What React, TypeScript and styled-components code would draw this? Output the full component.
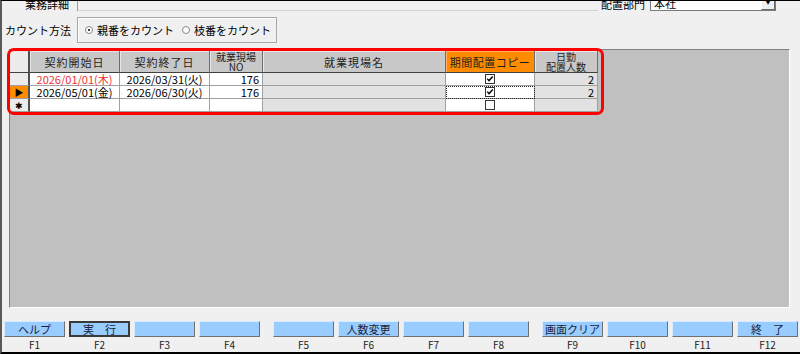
import React from 'react'
import styled, { createGlobalStyle, css } from 'styled-components'

const GlobalStyle = createGlobalStyle`
  body {
    margin: 0;
    background: #f0f0f0;
    font-family: "Noto Sans CJK JP", "Noto Sans", sans-serif;
  }
  * { box-sizing: border-box; }
`

const Window = styled.div`
  width: 800px;
  height: 354px;
  background: #f0f0f0;
  border-top: 1px solid #000;
  border-bottom: 2px solid #000;
  border-left: 2px solid #5a5a5a;
  display: flex;
  flex-direction: column;
  overflow: hidden;
  color: #000;
`

// --- top strip (tab edge + 配置部門 select, cut off at the top) ---
const TopBar = styled.div`
  height: 10px;
  display: flex;
  align-items: flex-end;
  overflow: hidden;
  font-size: 11px;
`

const TabLabel = styled.div`
  width: 76px;
  height: 14px;
  line-height: 14px;
  padding-left: 23px;
  border-right: 1px solid #9a9a9a;
  flex-shrink: 0;
`

const TabLine = styled.div`
  flex: 1;
  height: 100%;
  border-bottom: 1px solid #d4d4d4;
`

const DeptLabel = styled.div`
  height: 14px;
  line-height: 14px;
  margin: 0 5px 0 3px;
`

const Select = styled.div`
  width: 126px;
  height: 14px;
  margin-right: 24px;
  background: #fff;
  border: 1px solid #7a7a7a;
  border-top: none;
  display: flex;
  align-items: stretch;
  line-height: 12px;
  padding-left: 3px;
`

const SelectValue = styled.span`
  flex: 1;
`

const SelectButton = styled.span`
  width: 14px;
  background: #f0f0f0;
  border-left: 1px solid #fff;
  border-right: 1px solid #696969;
  border-bottom: 1px solid #696969;
  font-size: 7px;
  display: flex;
  align-items: flex-end;
  justify-content: center;
  padding-bottom: 2px;
`

// --- カウント方法 row ---
const FilterRow = styled.div`
  height: 37px;
  padding: 6px 0 0 3px;
  display: flex;
  align-items: flex-start;
  font-size: 11px;
`

const FilterLabel = styled.div`
  width: 72px;
  line-height: 26px;
`

const RadioGroup = styled.div`
  width: 200px;
  height: 26px;
  border: 1px solid #a8a8a8;
  box-shadow: inset 1px 1px 0 #fff;
  display: flex;
  align-items: center;
  gap: 8px;
  padding-left: 7px;
`

const RadioOption = styled.label`
  display: flex;
  align-items: center;
  gap: 4px;
  font-size: 11px;
`

const RadioDot = styled.span<{ $checked?: boolean }>`
  width: 8px;
  height: 8px;
  border-radius: 50%;
  border: 1px solid #888;
  background: #fff;
  position: relative;
  ${p => p.$checked && css`
    &::after {
      content: '';
      position: absolute;
      left: 2px;
      top: 2px;
      width: 2px;
      height: 2px;
      border-radius: 50%;
      background: #000;
    }
  `}
`

// --- grid ---
const GridPanel = styled.div`
  margin: 1px 0 0 7px;
  width: 781px;
  height: 259px;
  background: #c0c0c0;
  border-top: 1px solid #808080;
  border-left: 1px solid #808080;
  border-right: 1px solid #fff;
  border-bottom: 1px solid #fff;
  padding-top: 1px;
`

const TableWrap = styled.div`
  position: relative;
  width: 588px;

  &::after {
    content: '';
    position: absolute;
    top: -3px;
    left: -3px;
    right: -6px;
    bottom: -3px;
    border: 3px solid #f00;
    border-radius: 7px;
    pointer-events: none;
  }
`

const Table = styled.div`
  display: grid;
  grid-template-columns: 20px 90px 90px 53px 183px 89px 63px;
  grid-template-rows: 22px 13px 13px 13px;
  font-size: 11px;
`

const HeadCell = styled.div<{ $accent?: boolean; $corner?: boolean; $twoLine?: boolean }>`
  background: ${p => (p.$corner ? '#ececec' : p.$accent ? '#ff8c00' : '#c8c8c8')};
  border-right: 1px solid #6e6e6e;
  border-bottom: 1px solid #404040;
  box-shadow: inset 1px 1px 0 ${p => (p.$accent ? '#ffb060' : '#e6e6e6')};
  display: flex;
  flex-direction: column;
  align-items: center;
  justify-content: center;
  line-height: 12px;
  color: #1e1e1e;
  letter-spacing: ${p => (p.$accent ? '0.5px' : '1px')};
  ${p => p.$twoLine && css`
    font-size: 10px;
    line-height: 10px;
    letter-spacing: 0;
  `}
  ${p => p.$corner && css`border-right: 2px solid #505050;`}
`

const RowHead = styled.div<{ $current?: boolean }>`
  background: ${p => (p.$current ? '#ff8c00' : '#ececec')};
  border-right: 2px solid #505050;
  border-bottom: 1px solid #a0a0a0;
  display: flex;
  align-items: center;
  justify-content: center;
  font-size: 9px;
  line-height: 1;
`

const Cell = styled.div<{ $align?: 'left' | 'center' | 'right'; $locked?: boolean; $color?: string; $focus?: boolean }>`
  background: ${p => (p.$locked ? '#e2e2e2' : '#fff')};
  border-right: 1px solid #a0a0a0;
  border-bottom: 1px solid #a0a0a0;
  display: flex;
  align-items: center;
  justify-content: ${p => (p.$align === 'right' ? 'flex-end' : p.$align === 'center' ? 'center' : 'flex-start')};
  padding: 0 3px;
  line-height: 12px;
  color: ${p => p.$color || '#000'};
  white-space: nowrap;
  ${p => p.$focus && css`outline: 1px dotted #222; outline-offset: -1px;`}
`

const Check = ({ checked }: { checked?: boolean }) => (
  <svg width="10" height="10" viewBox="0 0 10 10">
    <rect x="0.5" y="0.5" width="9" height="9" fill="#fff" stroke="#333" />
    {checked && <path d="M2.2 4.6 L4 6.6 L7.8 2.6" fill="none" stroke="#000" strokeWidth="1.4" />}
  </svg>
)

// --- function keys ---
const FnBar = styled.div`
  height: 44px;
  padding: 13px 0 0 2px;
  display: flex;
  gap: 13px;
`

const FnGroup = styled.div`
  display: flex;
  gap: 4px;
`

const FnKey = styled.div`
  width: 61px;
  display: flex;
  flex-direction: column;
  align-items: center;
`

const FnButton = styled.div<{ $focused?: boolean }>`
  width: 100%;
  height: 16px;
  background: #99ccff;
  border: 1px solid;
  border-color: #d8ecff #707070 #707070 #d8ecff;
  font-size: 11px;
  line-height: 14px;
  text-align: center;
  color: #1a1e3c;
  white-space: pre;
  ${p => p.$focused && css`border: 2px solid #3a3a3a; line-height: 12px;`}
`

const FnLabel = styled.div`
  font-size: 10px;
  line-height: 12px;
  margin-top: 2px;
  color: #222;
`

const rows = [
  { start: '2026/01/01(木)', end: '2026/03/31(火)', no: '176', name: '', copy: true, count: '2', red: true },
  { start: '2026/05/01(金)', end: '2026/06/30(火)', no: '176', name: '', copy: true, count: '2', current: true },
]

const keys = [
  ['ヘルプ', '実　行', '', ''],
  ['', '人数変更', '', ''],
  ['画面クリア', '', '', '終　了'],
]

export default function App() {
  return (
    <Window>
      <GlobalStyle />
      <TopBar>
        <TabLabel>業務詳細</TabLabel>
        <TabLine />
        <DeptLabel>配置部門</DeptLabel>
        <Select>
          <SelectValue>本社</SelectValue>
          <SelectButton>▼</SelectButton>
        </Select>
      </TopBar>

      <FilterRow>
        <FilterLabel>カウント方法</FilterLabel>
        <RadioGroup>
          <RadioOption><RadioDot $checked />親番をカウント</RadioOption>
          <RadioOption><RadioDot />枝番をカウント</RadioOption>
        </RadioGroup>
      </FilterRow>

      <GridPanel>
        <TableWrap>
          <Table>
            <HeadCell $corner />
            <HeadCell>契約開始日</HeadCell>
            <HeadCell>契約終了日</HeadCell>
            <HeadCell $twoLine><span>就業現場</span><span>NO</span></HeadCell>
            <HeadCell>就業現場名</HeadCell>
            <HeadCell $accent>期間配置コピー</HeadCell>
            <HeadCell $twoLine><span>日勤</span><span>配置人数</span></HeadCell>

            {rows.map((r, i) => (
              <React.Fragment key={i}>
                <RowHead $current={r.current}>{r.current ? '▶' : ''}</RowHead>
                <Cell $align="center" $color={r.red ? '#f03030' : undefined}>{r.start}</Cell>
                <Cell $align="center">{r.end}</Cell>
                <Cell $align="right">{r.no}</Cell>
                <Cell $locked>{r.name}</Cell>
                <Cell $align="center" $focus={r.current}><Check checked={r.copy} /></Cell>
                <Cell $locked $align="right">{r.count}</Cell>
              </React.Fragment>
            ))}

            <RowHead>✱</RowHead>
            <Cell />
            <Cell />
            <Cell />
            <Cell $locked />
            <Cell $align="center"><Check /></Cell>
            <Cell $locked />
          </Table>
        </TableWrap>
      </GridPanel>

      <FnBar>
        {keys.map((group, g) => (
          <FnGroup key={g}>
            {group.map((label, k) => {
              const n = g * 4 + k + 1
              return (
                <FnKey key={n}>
                  <FnButton $focused={n === 2}>{label}</FnButton>
                  <FnLabel>F{n}</FnLabel>
                </FnKey>
              )
            })}
          </FnGroup>
        ))}
      </FnBar>
    </Window>
  )
}
